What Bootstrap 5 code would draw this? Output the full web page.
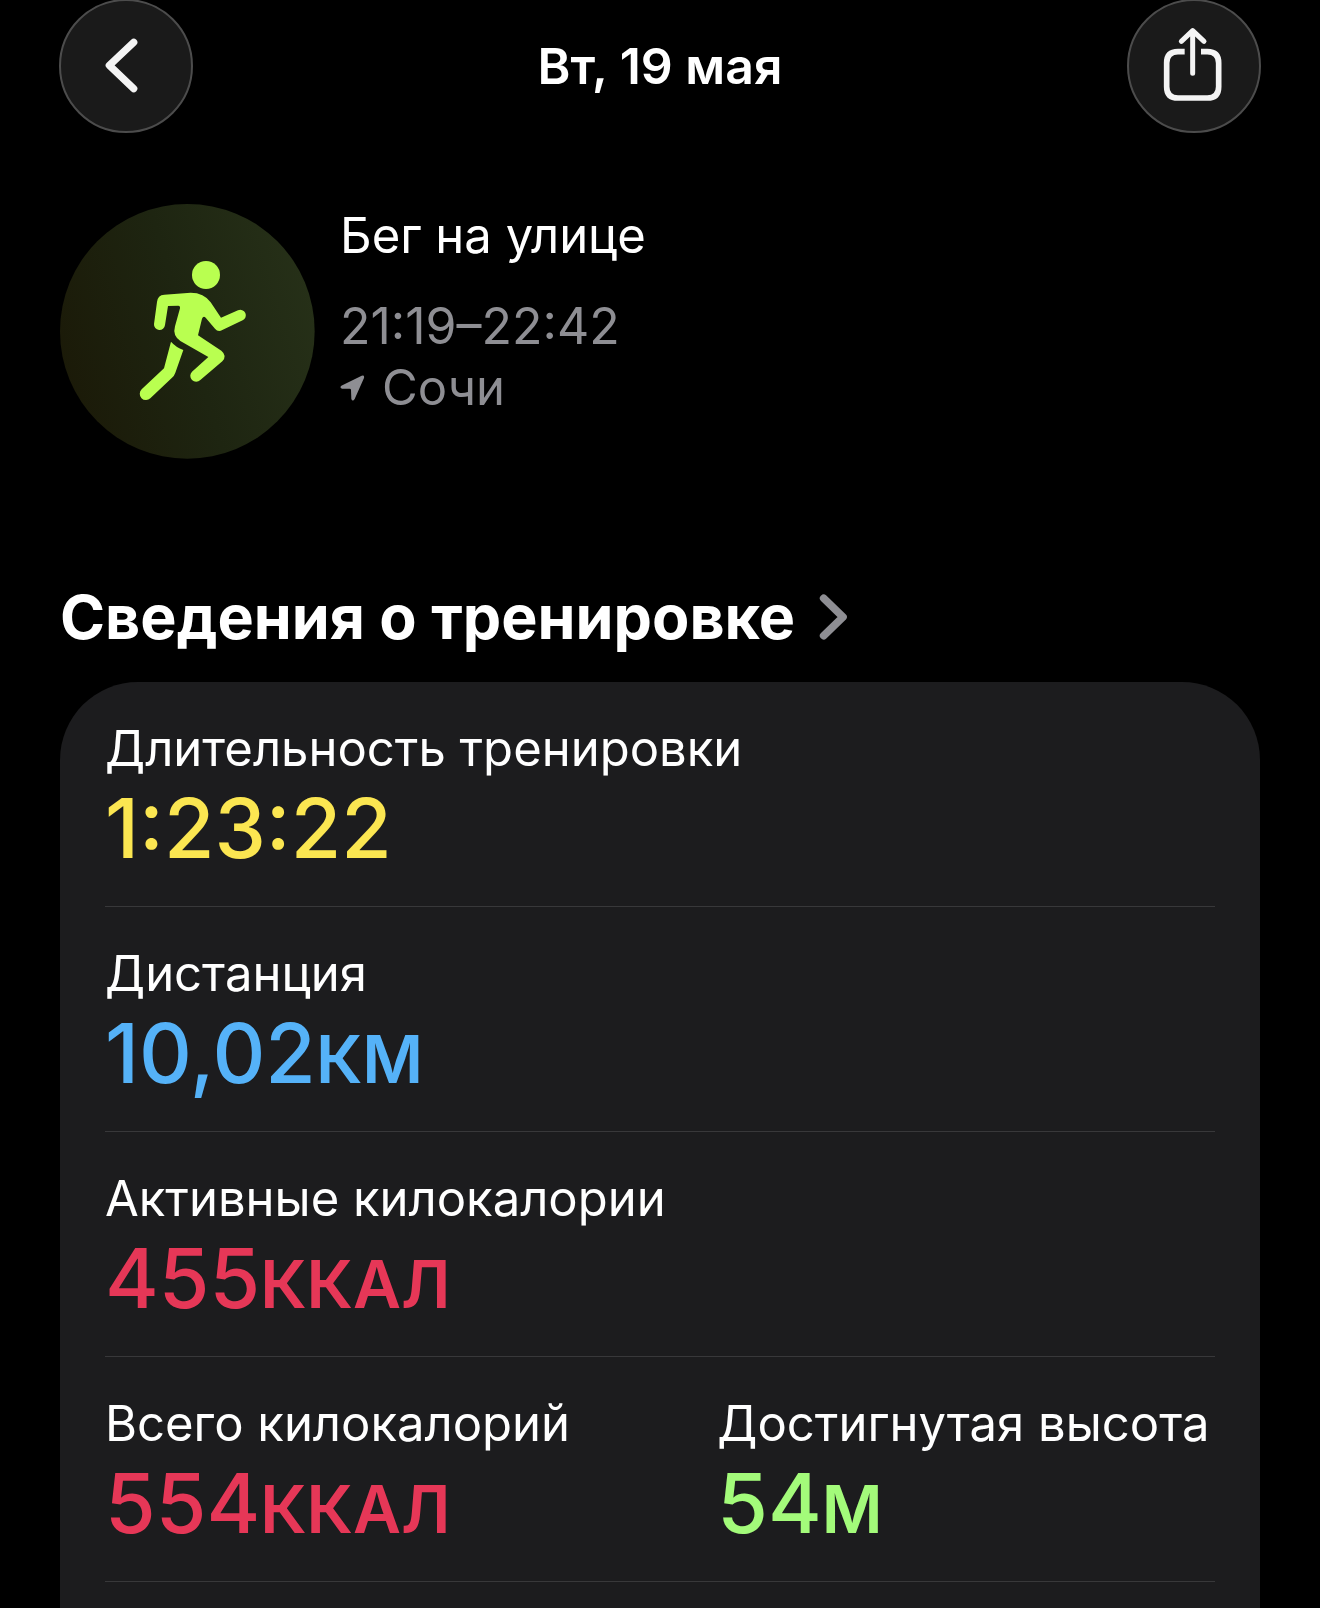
<!DOCTYPE html>
<html lang="ru" data-bs-theme="dark">
<head>
<meta charset="utf-8">
<meta name="viewport" content="width=device-width, initial-scale=1">
<title>Вт, 19 мая</title>
<link href="https://cdn.jsdelivr.net/npm/bootstrap@5.3.0/dist/css/bootstrap.min.css" rel="stylesheet">
<style>
  body { background: #000; color: #fff; font-family: Inter, "Noto Sans", sans-serif; }
  .screen { padding: 0 60px; }
  .top-bar { margin: -1px -1px 0; }
  .round-btn { width: 134px; height: 134px; background: #1a1a1a; border: 2px solid #4c4c4c; }
  .round-btn:hover { background: #262626; border-color: #4c4c4c; }
  .day-title { font-size: 50px; line-height: 60px; font-weight: 600; }
  .workout { margin-top: 71px; gap: 25px; }
  .sport-icon { width: 255px; height: 255px; }
  .workout-text { font-size: 50px; line-height: 61px; }
  .workout-name { font-size: 49px; line-height: 61px; margin: 1px 0 30px; font-weight: 400; }
  .dim { color: #8e8e93; }
  .place { gap: 16px; font-size: 49px; }
  .section-title { margin: 120px 0 0; font-size: 61px; line-height: 76px; font-weight: 700; }
  .section-title a { gap: 24px; }
  .details { margin-top: 27px; padding: 0 45px; background: #1c1c1e; border-radius: 78px 78px 0 0; }
  .metric-row { display: grid; grid-template-columns: minmax(0, 11fr) minmax(0, 9fr); column-gap: 4px; height: 225px; padding-top: 36px; border-bottom: 1px solid #38383a; }
  .metric-row dt { font-size: 49px; line-height: 62px; font-weight: 400; white-space: nowrap; }
  .metric-row dd { margin: 0; font-size: 82px; line-height: 98px; font-weight: 500; white-space: nowrap; }
  .unit { font-size: 66px; font-weight: 600; }
  .c-time { color: #fbe651; }
  .c-dist { color: #55b2f8; }
  .c-energy { color: #e63757; }
  .c-climb { color: #a3fb7a; }
</style>
<script src="https://cdn.jsdelivr.net/npm/bootstrap@5.3.0/dist/js/bootstrap.bundle.min.js" defer></script>
</head>
<body>
<div class="screen container-fluid d-flex flex-column min-vh-100">
  <header class="top-bar d-flex justify-content-between align-items-center">
    <button type="button" class="btn round-btn rounded-circle p-0 d-flex align-items-center justify-content-center" aria-label="Назад">
      <svg width="130" height="130" viewBox="63 3 390 390" fill="none" stroke="#f4f4f4" stroke-width="22" stroke-linecap="round" stroke-linejoin="round"><path d="M281 127 208 196 281 266"/></svg>
    </button>
    <h1 class="day-title m-0">Вт, 19 мая</h1>
    <button type="button" class="btn round-btn rounded-circle p-0 d-flex align-items-center justify-content-center" aria-label="Поделиться">
      <svg width="130" height="130" viewBox="87 3 390 390" fill="none" stroke="#f4f4f4" stroke-width="17" stroke-linejoin="round"><path d="M254 155H234Q200 155 200 189V260Q200 294 234 294H322Q356 294 356 260V189Q356 155 322 155H303"/><path stroke-width="15" stroke-linecap="round" d="M278 220V93M244 124 278 92 312 124"/></svg>
    </button>
  </header>

  <main class="d-flex flex-column flex-grow-1">
    <section class="workout d-flex">
      <svg class="sport-icon flex-shrink-0" viewBox="30 42 765 765" role="img" aria-label="Бег">
        <defs><linearGradient id="disc" x1="0" y1=".65" x2="1" y2=".35"><stop offset="0" stop-color="#1b1a08"/><stop offset=".5" stop-color="#1e2511"/><stop offset="1" stop-color="#263018"/></linearGradient></defs>
        <circle cx="412" cy="424" r="382" fill="url(#disc)"/>
        <g fill="#b9ff50">
          <circle cx="468" cy="255" r="42"/>
          <path d="M312 402 321 336Q323 315 343 314L422 308Q462 308 482 337L513 383 564 361A16.500 16.500 0 0 1 578 391L517 420Q504 427 495 416L467 383Q460 377 456 386L444 436 514 482Q532 497 517 514L451 570A17.500 17.500 0 0 1 426 545L475 501 391 453Q367 437 375 409L390 355Q391 347 385 347L354 348 345 405A16.500 16.500 0 0 1 312 402Z"/>
          <path d="M363 455Q378 472 400 480L376 548Q373 557 366 563L301 625A18.500 18.500 0 0 1 275 598L342 535Z"/>
        </g>
      </svg>
      <div class="workout-text">
        <h2 class="workout-name">Бег на улице</h2>
        <div class="dim">21:19–22:42</div>
        <div class="dim place d-flex align-items-center">
          <svg width="26" height="28" viewBox="64 556 78 84" fill="#8e8e93" aria-hidden="true"><path d="M129 561Q138 558 136 568L108 631Q102 640 98 631L97 604Q97 600 93 600L70 600Q62 597 68 591Z"/></svg>
          <span>Сочи</span>
        </div>
      </div>
    </section>

    <h2 class="section-title"><a href="#details" class="d-inline-flex align-items-center text-white text-decoration-none">Сведения о тренировке
      <svg width="30" height="48" viewBox="114 68 90 144" fill="none" stroke="#8e8e93" stroke-width="23" stroke-linecap="round" stroke-linejoin="round" aria-hidden="true"><path d="M128 84 186 140 128 196"/></svg></a></h2>

    <section id="details" class="details flex-grow-1">
      <dl class="metric-row mb-0"><div><dt>Длительность тренировки</dt><dd class="c-time">1:23:22</dd></div></dl>
      <dl class="metric-row mb-0"><div><dt>Дистанция</dt><dd class="c-dist">10,02<span class="unit">КМ</span></dd></div></dl>
      <dl class="metric-row mb-0"><div><dt>Активные килокалории</dt><dd class="c-energy">455<span class="unit">ККАЛ</span></dd></div></dl>
      <dl class="metric-row mb-0">
        <div><dt>Всего килокалорий</dt><dd class="c-energy">554<span class="unit">ККАЛ</span></dd></div>
        <div><dt>Достигнутая высота</dt><dd class="c-climb">54<span class="unit">М</span></dd></div>
      </dl>
    </section>
  </main>
</div>
</body>
</html>
